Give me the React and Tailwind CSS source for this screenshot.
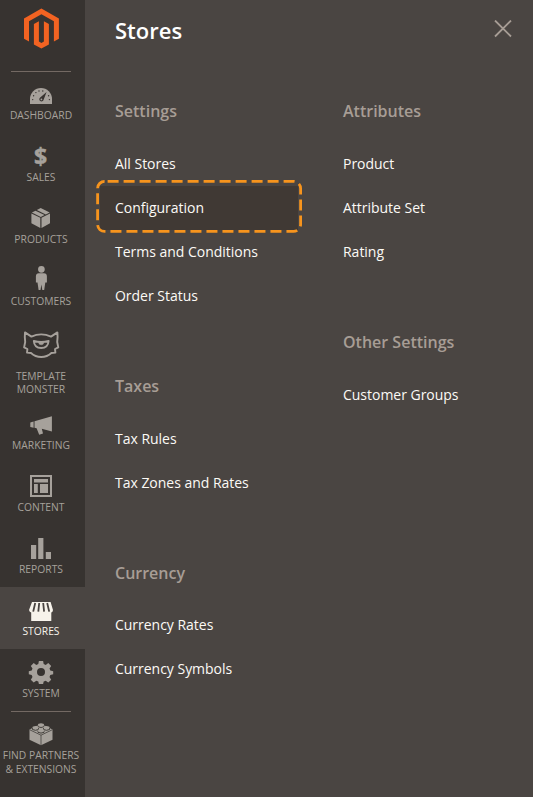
import React from "react";

const icons = {
  dashboard: (
    <>
      <path fill="currentColor" d="M9 33V28a11 11 0 0 1 22 0v5z" />
      <g fill="#373330">
        <circle cx="11.7" cy="28.6" r=".7" />
        <circle cx="12.6" cy="24.8" r=".7" />
        <circle cx="14.9" cy="21.6" r=".7" />
        <circle cx="18" cy="20" r=".7" />
        <circle cx="21.8" cy="20" r=".7" />
        <circle cx="27.6" cy="24.8" r=".7" />
        <circle cx="28.4" cy="28.6" r=".7" />
        <path d="M25.6 21l-3 7.8a2.2 2.2 0 1 1-3.4-2.4z" />
      </g>
      <circle cx="20.4" cy="28.4" r=".9" fill="currentColor" />
    </>
  ),
  sales: (
    <text x="19.7" y="31.5" textAnchor="middle" fill="currentColor" stroke="currentColor" strokeWidth=".5" className="text-[23px] font-bold">$</text>
  ),
  products: (
    <>
      <path fill="currentColor" d="M10.4 18.6l8.9 4.2V33l-8.9-4.7zM20.5 22.8l8.5-4.2v9.7L20.5 33z" />
      <path fill="currentColor" d="M10.9 17.5l3.6-1.8 9 4.4-3.7 1.8zM15.8 15l3.9-1.9 9 4.4-3.9 1.9z" />
    </>
  ),
  customers: (
    <path fill="currentColor" d="M20.4 9a3.3 3.3 0 1 1 0 6.7 3.3 3.3 0 0 1 0-6.7zM17.8 16.2h5.2q2.8 0 2.9 3v6.2h-1.6l-1.1 7.6h-1.9l-.9-5.4-.9 5.4h-1.9l-1.1-7.6h-1.6v-6.2q.1-3 2.9-3z" />
  ),
  monster: (
    <g fill="none" stroke="currentColor" strokeWidth="1.9" strokeLinejoin="round">
      <path d="M4 13.4l6.4 4.2q9.8-4.4 19.600 0l6.400-4.200q.5 5-.2 9.600l1.100 5.400-3.300 1.600.4 3.600-4 .4q-4.200 4-10.200 4t-10.200-4l-4-.4.4-3.600-3.300-1.600 1.100-5.400q-.7-4.600-.2-9.600z" />
      <path d="M12.800 22q.5 7 7.400 7t7.400-7q-7.400 2-14.800 0z" />
      <path fill="currentColor" strokeWidth=".5" d="M17.400 23.200q2.800.4 5.600 0-.4 2.600-2.800 2.600t-2.800-2.600z" />
    </g>
  ),
  marketing: (
    <path fill="currentColor" d="M9.3 21.5l3.3-1v6.2l-3.3-.8zM13.5 20.2l17.4-5v15.2l-10.1-2.6 1.2 4.7-3.8 1.2-2.6-6.4-2.1-.6z" />
  ),
  content: (
    <>
      <path fill="currentColor" fillRule="evenodd" d="M9 12h22v22H9zM11 14v18h18V14z" />
      <path fill="currentColor" d="M13 16h14v3.4H13zM13 21h3.8v9H13zM19 21h8v9h-8z" />
    </>
  ),
  reports: <path fill="currentColor" d="M10 20h5.2v14H10zM17.2 13h5.2v21h-5.2zM24.8 27H30v7h-5.2z" />,
  stores: (
    <>
      <path fill="currentColor" d="M11 15h18.6l2.4 8q-.2 2.3-1.7 2.6V34H10.2v-8.4Q8.5 25.2 8 23z" />
      <path fill="none" stroke="#4a4542" strokeWidth="1.8" d="M14.2 16l-2 8.6M18.2 16l-.9 8.6M22.2 16l.9 8.6M26.2 16l2 8.6" />
    </>
  ),
  system: (
    <path
      fill="currentColor"
      fillRule="evenodd"
      d="M17.9 12h4.2l.6 3 2 .9 2.6-1.8 2.9 2.9-1.7 2.6.8 2 2.9.6v3l-2.9.8-.8 2 1.7 2.7-2.9 2.8-2.6-1.7-2 .8-.6 2.4h-4.2l-.6-2.4-2-.8-2.6 1.7-2.9-2.8 1.7-2.7-.8-2-2.9-.8v-3l2.9-.6.8-2L9.8 17l2.9-2.9 2.6 1.8 2-.9zM20 19a4 4 0 1 0 0 8 4 4 0 0 0 0-8z"
    />
  ),
  partners: (
    <>
      <path fill="currentColor" d="M8.5 18.4L20 12.8l11.5 5.6v10.3L20 34.2 8.5 28.7z" />
      <path fill="none" stroke="#373330" strokeWidth=".7" d="M8.8 18.8L20 24.2l11.2-5.4M20 24.2v10" />
      <g fill="currentColor" stroke="#373330" strokeWidth=".9">
        <path d="M17 14v1.7q3 1.6 6 0V14M11.5 16.8v1.7q3 1.6 6 0v-1.7M22.5 16.8v1.7q3 1.6 6 0v-1.7M17 19.6v1.7q3 1.6 6 0v-1.7" />
        <ellipse cx="20" cy="13.7" rx="3" ry="1.5" stroke="none" />
        <ellipse cx="14.5" cy="16.6" rx="3" ry="1.5" stroke="none" />
        <ellipse cx="25.5" cy="16.6" rx="3" ry="1.5" stroke="none" />
        <ellipse cx="20" cy="19.4" rx="3" ry="1.5" stroke="none" />
      </g>
    </>
  ),
};

const nav = [
  { icon: "dashboard", lines: ["DASHBOARD"], size: "h-[62px]" },
  { icon: "sales", lines: ["SALES"], size: "h-[62px]" },
  { icon: "products", lines: ["PRODUCTS"], size: "h-[62px]" },
  { icon: "customers", lines: ["CUSTOMERS"], size: "h-[62px]" },
  { icon: "monster", lines: ["TEMPLATE", "MONSTER"], size: "h-[82px]", text: "pt-[13px] leading-[13.4px]" },
  { icon: "marketing", lines: ["MARKETING"], size: "h-[62px]" },
  { icon: "content", lines: ["CONTENT"], size: "h-[62px]" },
  { icon: "reports", lines: ["REPORTS"], size: "h-[62px]" },
  { icon: "stores", lines: ["STORES"], size: "h-[62px]", active: true },
  { icon: "system", lines: ["SYSTEM"], size: "h-[62px]" },
  { icon: "partners", lines: ["FIND PARTNERS", "& EXTENSIONS"], size: "h-[86px]", divider: true },
];

function NavItem({ icon, lines, size, text = "leading-[13.5px]", active, divider }) {
  return (
    <li className={`${size} ${active ? "bg-[#4a4542] text-[#f7f3eb]" : "text-[#a6a19b]"}`}>
      <a className="flex w-[82px] flex-col items-center">
        {divider && <span className="-mb-px h-px w-[60px] bg-[#736963]" />}
        <svg width="40" height="38" viewBox="0 0 40 38" className="shrink-0 overflow-visible">
          {icons[icon]}
        </svg>
        <span className={`flex flex-col items-center text-[10.3px] whitespace-nowrap ${text}`}>
          {lines.map((l) => (
            <span key={l}>{l}</span>
          ))}
        </span>
      </a>
    </li>
  );
}

function Group({ title, items, className = "", heading = "h-[41px]" }) {
  return (
    <section className={className}>
      <h2 className={`${heading} text-[16px] leading-[22px] font-semibold text-[#a79d95]`}>{title}</h2>
      <ul>
        {items.map((item) => (
          <li key={item} className="relative flex h-11 items-center text-[14px] tracking-[-0.02px] whitespace-nowrap text-[#fcfaf6]">
            {item === "Configuration" && (
              <>
                <span className="absolute top-px -left-[15px] h-11 w-[198px] bg-[#403934]" />
                <svg className="absolute -top-[5px] -left-[19px]" width="207" height="54" viewBox="0 0 207 54">
                  <rect x="1.6" y="1.4" width="203" height="50" rx="7" fill="none" stroke="#f7941d" strokeWidth="2.8" strokeDasharray="11 5" strokeDashoffset="-3" />
                </svg>
              </>
            )}
            <a className="relative">{item}</a>
          </li>
        ))}
      </ul>
    </section>
  );
}

export default function App() {
  return (
    <div className="flex h-[797px] w-[533px] overflow-hidden bg-[#4a4542] font-['Open_Sans',sans-serif]">
      <aside className="w-[85px] shrink-0 bg-[#373330]">
        <div className="flex h-[71px] w-[82px] justify-center pt-[8px]">
          <svg width="36" height="41" viewBox="0 0 36 41" fill="#f26322">
            <path d="M18.4 .5l17.5 10v20.2l-5 2.8V13.3L18.4 6.2 6 13.3v20.2l-5-2.8V10.5z" />
            <path d="M15.9 13.3v20.3l2.5 1.5 2.5-1.5V13.3l5 2.8v20.3L18.4 40.6l-7.5-4.2V16.1z" />
          </svg>
        </div>
        <div className="-mb-px ml-[11px] h-px w-[60px] bg-[#736963]" />
        <ul>
          {nav.map((n) => (
            <NavItem key={n.icon} {...n} />
          ))}
        </ul>
      </aside>
      <main className="flex-1 pl-[30px]">
        <header className="flex h-[100px] items-start justify-between pt-[15px] pr-[21px]">
          <h1 className="text-[22px] leading-[30px] font-semibold text-white">Stores</h1>
          <svg width="18" height="18" viewBox="0 0 18 18" className="mt-[5px]" stroke="#a79d95" strokeWidth="1.8">
            <path d="M1 .5l16 16M17 .5l-16 16" />
          </svg>
        </header>
        <div className="flex">
          <div className="w-[228px]">
            <Group title="Settings" items={["All Stores", "Configuration", "Terms and Conditions", "Order Status"]} className="h-[275px]" />
            <Group title="Taxes" items={["Tax Rules", "Tax Zones and Rates"]} className="h-[187px]" />
            <Group title="Currency" items={["Currency Rates", "Currency Symbols"]} heading="h-10" />
          </div>
          <div>
            <Group title="Attributes" items={["Product", "Attribute Set", "Rating"]} className="h-[231px]" />
            <Group title="Other Settings" items={["Customer Groups"]} />
          </div>
        </div>
      </main>
    </div>
  );
}
